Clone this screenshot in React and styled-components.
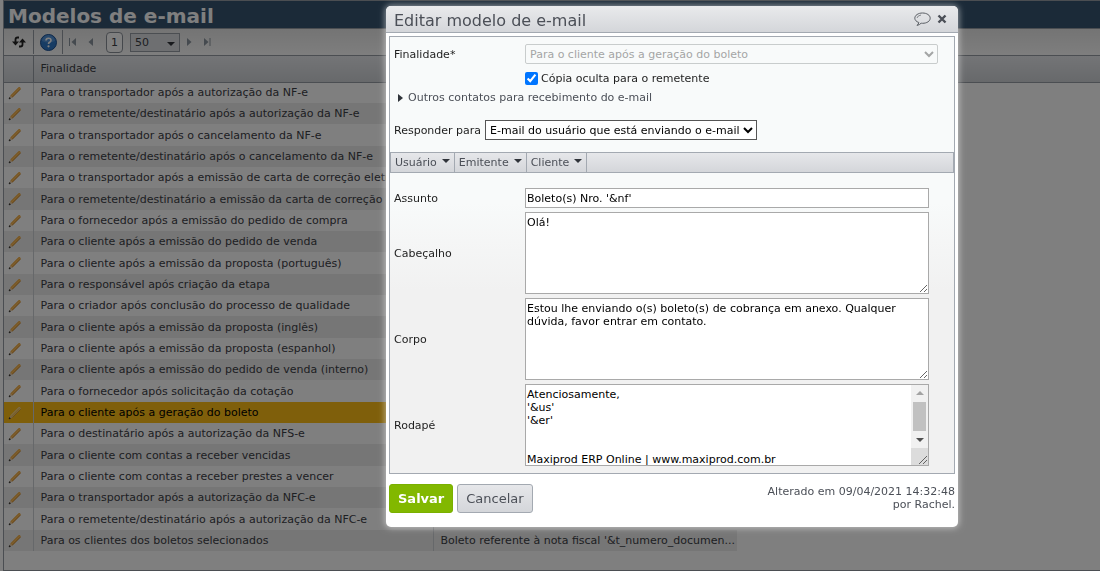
import React, { useState } from "react";
import styled, { createGlobalStyle, css } from "styled-components";

const GlobalStyle = createGlobalStyle`
    * {
        box-sizing: border-box;
    }

    body {
        margin: 0;
        background-color: #ffffff;
        font-family: 'DejaVu Sans', Verdana, sans-serif;
        font-size: 11px;
        line-height: 13px;
        color: #3c4046;
    }

    button, input, select, textarea {
        font-family: inherit;
        font-size: 11px;
    }
`;

//PAGE

const StyledPage = styled.main`
    min-height: 100vh;
    display: flex;
    flex-direction: column;
    margin-left: 3px;
    border: 1px solid #979da4;
    border-right: none;
`;

const StyledPageTitle = styled.h1`
    margin: 0;
    padding-left: 4px;
    height: 28px;
    background-color: #365470;
    border-bottom: 1px solid #979da4;
    color: #ffffff;
    font-size: 20px;
    font-weight: bold;
    line-height: 30px;
`;

const StyledToolbar = styled.div`
    display: flex;
    align-items: center;
    height: 27px;
    background: linear-gradient(#e8e8e8, #fdfdfd);
    border-bottom: 1px solid #979da4;
`;

const StyledToolGroup = styled.div`
    display: flex;
    align-items: center;
    justify-content: center;
    width: ${props => props.$width}px;
    height: 24px;
    border-right: 1px solid #979da4;
`;

const StyledIconButton = styled.button`
    display: flex;
    align-items: center;
    justify-content: center;
    padding: 0;
    border: none;
    background: none;
    cursor: pointer;
`;

const StyledPager = styled.div`
    display: flex;
    align-items: center;
    gap: 7px;
    padding-left: 6px;
`;

const StyledPagerSteps = styled.div`
    display: flex;
    align-items: center;
    gap: 12px;
`;

const StyledPageNumber = styled.button`
    width: 17px;
    height: 21px;
    margin: 0 0 0 6px;
    padding: 0;
    border: 1px solid #8b9199;
    border-radius: 4px;
    background-color: #ffffff;
    color: #3c4046;
`;

const StyledSelectWrap = styled.div`
    position: relative;

    svg {
        position: absolute;
        right: 5px;
        top: 9px;
        pointer-events: none;
    }
`;

const StyledPageSize = styled.select`
    appearance: none;
    display: block;
    width: 50px;
    height: 19px;
    padding: 0 4px;
    border: 1px solid #979da4;
    border-radius: 0;
    background-color: #dcdfe3;
    color: #3c4046;
`;

//GRID

const StyledGridHead = styled.thead`
    background: linear-gradient(#e8eaee, #cfd2d6);
`;

const StyledGrid = styled.table`
    width: 100%;
    border-collapse: collapse;
    table-layout: fixed;
`;

const StyledTh = styled.th`
    height: 26px;
    padding: 0 7px;
    border-bottom: 1px solid #979da4;
    border-right: ${props => props.$line ? "1px solid #979da4" : "none"};
    width: ${props => props.$width ? props.$width + "px" : "auto"};
    font-weight: normal;
    text-align: left;
`;

const StyledTd = styled.td`
    padding: 0 2px 0 7px;
    border-right: ${props => props.$line ? "1px solid #cdd0d4" : "none"};
    background-color: ${props => props.$bg};
    white-space: nowrap;
    overflow: hidden;
    text-overflow: ellipsis;
    color: ${props => props.$selected ? "#000000" : "#3c4046"};
`;

const StyledTr = styled.tr`
    height: 21px;

    &:nth-child(3n) {
        height: 22px;
    }
`;

const StyledPencil = styled(StyledIconButton)`
    margin-left: -3px;
`;

//DIALOG

const StyledOverlay = styled.div`
    position: fixed;
    inset: 0;
    display: flex;
    justify-content: flex-end;
    align-items: flex-start;
    padding: 6px 142px 0 0;
    background-color: rgba(0, 0, 0, 0.5);
`;

const StyledDialog = styled.section`
    width: 52%;
    min-width: 572px;
    border-radius: 5px;
    background-color: #ffffff;
    box-shadow: 0 0 6px 1px rgba(255, 255, 255, 0.5);
`;

const StyledDialogHeader = styled.header`
    display: flex;
    align-items: center;
    gap: 6px;
    height: 27px;
    padding: 0 11px 0 8px;
    border-bottom: 1px solid #a3a9b1;
    border-radius: 5px 5px 0 0;
    background: linear-gradient(#e9eaec, #d4d6da);
`;

const StyledDialogTitle = styled.h2`
    flex: 1;
    margin: 0;
    padding-top: 3px;
    color: #4b4f57;
    font-size: 16px;
    font-weight: normal;
    line-height: 20px;
`;

const StyledPanel = styled.div`
    margin: 3px;
    padding: 7px 0 3px;
    border: 1px solid #a3a9b1;
    background: linear-gradient(#f8fafa 0, #f8fafa 38%, #f1f1f1 58%);
    color: #1e1e1e;
`;

const StyledField = styled.div`
    display: grid;
    grid-template-columns: 131px 1fr;
    align-items: center;
    padding: 0 ${props => props.$right || 25}px 0 4px;
    margin-bottom: 4px;
`;

const StyledDisabledSelect = styled.select`
    width: 100%;
    height: 20px;
    padding: 0;
    border: 1px solid #b4b8b8;
    border-radius: 2px;
    background-color: #f8fafa;
    color: #808080;
`;

const StyledCheckRow = styled.div`
    display: flex;
    align-items: center;
    gap: 3px;
    padding: 4px 0 0 135px;

    input {
        width: 13px;
        height: 13px;
        margin: 0;
    }
`;

const StyledExpander = styled.button`
    display: flex;
    align-items: center;
    gap: 5px;
    margin: 6px 0 16px;
    padding: 0 8px;
    border: none;
    background: none;
    color: #4b4f57;
    line-height: 13px;
`;

const StyledReply = styled.div`
    display: flex;
    align-items: center;
    gap: 4px;
    padding-left: 4px;
    margin-bottom: 12px;
`;

const StyledReplySelect = styled.select`
    height: 20px;
    padding: 0;
    border: 1px solid #555555;
    border-radius: 0;
    background-color: #ffffff;
    color: #000000;
`;

const StyledMenuBar = styled.div`
    display: flex;
    height: 21px;
    margin-bottom: 15px;
    border: 1px solid #a3a9b1;
    background: linear-gradient(#e6e7ea, #d4d6da);
`;

const StyledMenuButton = styled.button`
    display: flex;
    gap: 5px;
    padding: 3px 4px 0;
    border: none;
    border-right: 1px solid #a3a9b1;
    background: none;
    color: #4b4f57;
    line-height: 13px;

    svg {
        margin-top: 3px;
    }
`;

const fieldBox = css`
    display: block;
    width: 100%;
    padding: 1px;
    border: 1px solid #a9a9a9;
    border-radius: 0;
    background-color: #ffffff;
    color: #000000;
    outline: none;
`;

const StyledInput = styled.input`
    ${fieldBox}
    height: 20px;
`;

const StyledTextarea = styled.textarea`
    ${fieldBox}
    height: 82px;
    padding-top: 3px;
    line-height: 13px;
    resize: ${props => props.$scrolled ? "none" : "vertical"};
`;

const StyledScrollArea = styled.div`
    position: relative;
`;

const StyledScrollbar = styled.div`
    position: absolute;
    top: 1px;
    right: 1px;
    bottom: 1px;
    width: 17px;
    display: flex;
    flex-direction: column;
    align-items: center;
    background-color: #f1f1f1;
    pointer-events: none;
`;

const StyledScrollArrow = styled.div`
    display: flex;
    align-items: center;
    height: 17px;
    transform: ${props => props.$up ? "rotate(180deg)" : "none"};
`;

const StyledScrollThumb = styled.div`
    flex: 1;
    width: 13px;
    background-color: #c1c1c1;
`;

const StyledScrollCorner = styled.div`
    display: flex;
    align-items: flex-end;
    justify-content: flex-end;
    width: 17px;
    height: 17px;
    background-color: #dcdcdc;
`;

const StyledFooter = styled.footer`
    display: flex;
    align-items: flex-start;
    gap: 4px;
    padding: 7px 3px 14px;
`;

const StyledButton = styled.button`
    height: 29px;
    padding: 0 8px;
    border: 1px solid ${props => props.$primary ? "#7ab000" : "#a3a9b1"};
    border-radius: 3px;
    background: ${props => props.$primary ? "#82b800" : "linear-gradient(#e6e7ea, #d4d6da)"};
    color: ${props => props.$primary ? "#ffffff" : "#4b4f57"};
    font-size: 13px;
    font-weight: ${props => props.$primary ? "bold" : "normal"};
`;

const StyledChanged = styled.p`
    width: 200px;
    margin: 1px 0 0 auto;
    color: #4b4f57;
    text-align: right;
`;

//ICONS

const CaretDown = ({ size = 8, color = "#30343a" }) => (
    <svg width={size} height={size / 2} viewBox="0 0 8 4"><path d="M0 0h8L4 4z" fill={color} /></svg>
);

const StepIcon = ({ next }) => (
    <svg width="5" height="8" viewBox="0 0 5 8"><path d={next ? "M0 0v8l4.500-4z" : "M5 0v8L0.500 4z"} fill="#8b959e" /></svg>
);

const EdgeIcon = ({ next }) => (
    <svg width="7" height="8" viewBox="0 0 7 8">
        <path d={next ? "M0 0v8l4.500-4z" : "M7 0v8L2.500 4z"} fill="#8b959e" />
        <path d={next ? "M6 0v8" : "M0.500 0v8"} stroke="#8b959e" />
    </svg>
);

const RefreshIcon = () => (
    <svg width="14" height="12" viewBox="0 0 14 12" fill="none" stroke="#222" strokeWidth="1.800">
        <path d="M7 1.500H5.500Q3.500 1.500 3.500 3.500V7" />
        <path d="M0 5.500h7L3.500 9.500z" fill="#222" stroke="none" />
        <path d="M7 10.500h1.500q2 0 2-2V5" />
        <path d="M7 6.500h7L10.500 2.500z" fill="#222" stroke="none" />
    </svg>
);

const HelpIcon = () => (
    <svg width="17" height="17" viewBox="0 0 17 17">
        <circle cx="8.500" cy="8.500" r="8" fill="#2f78c8" stroke="#1c4f92" />
        <path d="M2 7a6.500 6 0 0 1 13 0q-6.500 3-13 0z" fill="#6aa5e2" opacity="0.6" />
        <path d="M6 6.500Q6 4.200 8.500 4.200T11 6.300Q11 7.500 9.700 8.200T8.500 10" fill="none" stroke="#fff" strokeWidth="1.600" />
        <circle cx="8.500" cy="12.300" r="1.100" fill="#fff" />
    </svg>
);

const PencilIcon = ({ pale }) => (
    <svg width="14" height="14" viewBox="0 0 14 14">
        <path d="M2.300 9.500 10.500 1.200q0.700-0.600 1.500 0.100l0.500 0.600q0.600 0.700-0.100 1.400L4.200 11.500z" fill={pale ? "#f5d9a0" : "#f0a83c"} />
        <path d="M3.200 10.500 11.500 2.200" stroke={pale ? "#ffb300" : "#ffcf80"} strokeWidth="0.800" />
        <path d="M4.200 11.500 12.500 3.200" stroke="#b8741f" strokeWidth="0.600" />
        <path d="M2.300 9.500 1 13l3.200-1.500z" fill="#e8c9a0" />
        <path d="M1.500 11.500 1 13l1.500-0.600z" fill="#222" stroke="#222" strokeWidth="0.500" />
    </svg>
);

const BalloonIcon = () => (
    <svg width="17" height="15" viewBox="0 0 17 15" fill="none" stroke="#5a5e64">
        <path d="M4.800 10.500C2.300 9.700 0.800 8 0.800 6.200 0.800 3.300 4.200 1 8.500 1s7.700 2.200 7.700 5.200-3.400 5.100-7.700 5.100q-0.700 0-1.400-0.100-1.400 1.700-4.100 2.200 1.600-1.300 1.800-2.900z" />
        <path d="M3 6Q3.500 3.500 7 3" strokeWidth="0.700" />
    </svg>
);

const CloseIcon = () => (
    <svg width="10" height="10" viewBox="0 0 10 10"><path d="M1.500 1.500l7 7M8.500 1.500l-7 7" stroke="#4b4f57" strokeWidth="2.400" /></svg>
);

const GripIcon = () => (
    <svg width="10" height="10" viewBox="0 0 10 10"><path d="M1 9l8-8M5 9l4-4" stroke="#555" strokeWidth="0.900" /></svg>
);

//DATA

const models = [
    "Para o transportador após a autorização da NF-e",
    "Para o remetente/destinatário após a autorização da NF-e",
    "Para o transportador após o cancelamento da NF-e",
    "Para o remetente/destinatário após o cancelamento da NF-e",
    "Para o transportador após a emissão de carta de correção eletrônica",
    "Para o remetente/destinatário a emissão da carta de correção eletrônica",
    "Para o fornecedor após a emissão do pedido de compra",
    "Para o cliente após a emissão do pedido de venda",
    "Para o cliente após a emissão da proposta (português)",
    "Para o responsável após criação da etapa",
    "Para o criador após conclusão do processo de qualidade",
    "Para o cliente após a emissão da proposta (inglês)",
    "Para o cliente após a emissão da proposta (espanhol)",
    "Para o cliente após a emissão do pedido de venda (interno)",
    "Para o fornecedor após solicitação da cotação",
    "Para o cliente após a geração do boleto",
    "Para o destinatário após a autorização da NFS-e",
    "Para o cliente com contas a receber vencidas",
    "Para o cliente com contas a receber prestes a vencer",
    "Para o transportador após a autorização da NFC-e",
    "Para o remetente/destinatário após a autorização da NFC-e",
    "Para os clientes dos boletos selecionados",
];

const selectedModel = 15;

const rowColor = (index) => {
    if (index === selectedModel) return "#ffbf17";
    return index % 2 ? "#ececec" : "#ffffff";
};

const Toolbar = () => (
    <StyledToolbar>
        <StyledToolGroup $width={30}>
            <StyledIconButton aria-label="Atualizar"><RefreshIcon /></StyledIconButton>
        </StyledToolGroup>
        <StyledToolGroup $width={29}>
            <StyledIconButton aria-label="Ajuda"><HelpIcon /></StyledIconButton>
        </StyledToolGroup>
        <StyledPager>
            <StyledPagerSteps>
                <StyledIconButton aria-label="Primeira"><EdgeIcon /></StyledIconButton>
                <StyledIconButton aria-label="Anterior"><StepIcon /></StyledIconButton>
            </StyledPagerSteps>
            <StyledPageNumber>1</StyledPageNumber>
            <StyledSelectWrap>
                <StyledPageSize aria-label="Itens" defaultValue="50">
                    <option>50</option>
                </StyledPageSize>
                <CaretDown />
            </StyledSelectWrap>
            <StyledPagerSteps>
                <StyledIconButton aria-label="Próxima"><StepIcon next /></StyledIconButton>
                <StyledIconButton aria-label="Última"><EdgeIcon next /></StyledIconButton>
            </StyledPagerSteps>
        </StyledPager>
    </StyledToolbar>
);

const ModelGrid = () => (
    <StyledGrid>
        <StyledGridHead>
            <tr>
                <StyledTh $width={29} $line />
                <StyledTh $width={400}>Finalidade</StyledTh>
                <StyledTh $width={304} />
                <StyledTh />
            </tr>
        </StyledGridHead>
        <tbody>
            {models.map((model, index) => (
                <StyledTr key={model}>
                    <StyledTd $line $bg={rowColor(index)}>
                        <StyledPencil aria-label="Editar"><PencilIcon pale={index === selectedModel} /></StyledPencil>
                    </StyledTd>
                    <StyledTd $line $bg={rowColor(index)} $selected={index === selectedModel}>{model}</StyledTd>
                    <StyledTd $bg={rowColor(index)}>
                        {index === models.length - 1 && "Boleto referente à nota fiscal '&t_numero_documen..."}
                    </StyledTd>
                </StyledTr>
            ))}
        </tbody>
    </StyledGrid>
);

const EditDialog = () => {
    const [copy, setCopy] = useState(true);

    return (
        <StyledDialog role="dialog" aria-labelledby="dialog-title">
            <StyledDialogHeader>
                <StyledDialogTitle id="dialog-title">Editar modelo de e-mail</StyledDialogTitle>
                <StyledIconButton aria-label="Comentar"><BalloonIcon /></StyledIconButton>
                <StyledIconButton aria-label="Fechar"><CloseIcon /></StyledIconButton>
            </StyledDialogHeader>

            <StyledPanel>
                <StyledField $right={16}>
                    <label htmlFor="purpose">Finalidade*</label>
                    <StyledDisabledSelect id="purpose" disabled>
                        <option>Para o cliente após a geração do boleto</option>
                    </StyledDisabledSelect>
                </StyledField>
                <StyledCheckRow>
                    <input id="copy" type="checkbox" checked={copy} onChange={() => setCopy(!copy)} />
                    <label htmlFor="copy">Cópia oculta para o remetente</label>
                </StyledCheckRow>
                <StyledExpander>
                    <svg width="5" height="8" viewBox="0 0 5 8"><path d="M0 0v8l5-4z" fill="#30343a" /></svg>
                    Outros contatos para recebimento do e-mail
                </StyledExpander>
                <StyledReply>
                    <label htmlFor="reply">Responder para</label>
                    <StyledReplySelect id="reply">
                        <option>E-mail do usuário que está enviando o e-mail</option>
                    </StyledReplySelect>
                </StyledReply>
                <StyledMenuBar>
                    <StyledMenuButton>Usuário <CaretDown /></StyledMenuButton>
                    <StyledMenuButton>Emitente <CaretDown /></StyledMenuButton>
                    <StyledMenuButton>Cliente <CaretDown /></StyledMenuButton>
                </StyledMenuBar>
                <StyledField>
                    <label htmlFor="subject">Assunto</label>
                    <StyledInput id="subject" defaultValue="Boleto(s) Nro. '&nf'" />
                </StyledField>
                <StyledField>
                    <label htmlFor="header">Cabeçalho</label>
                    <StyledTextarea id="header" defaultValue="Olá!" />
                </StyledField>
                <StyledField>
                    <label htmlFor="body">Corpo</label>
                    <StyledTextarea id="body" defaultValue="Estou lhe enviando o(s) boleto(s) de cobrança em anexo. Qualquer dúvida, favor entrar em contato." />
                </StyledField>
                <StyledField>
                    <label htmlFor="footer">Rodapé</label>
                    <StyledScrollArea>
                        <StyledTextarea id="footer" $scrolled defaultValue={"Atenciosamente,\n'&us'\n'&er'\n\n\nMaxiprod ERP Online | www.maxiprod.com.br\n\n"} />
                        <StyledScrollbar aria-hidden="true">
                            <StyledScrollArrow $up><CaretDown color="#a3a3a3" /></StyledScrollArrow>
                            <StyledScrollThumb />
                            <StyledScrollArrow><CaretDown color="#505050" /></StyledScrollArrow>
                            <StyledScrollCorner><GripIcon /></StyledScrollCorner>
                        </StyledScrollbar>
                    </StyledScrollArea>
                </StyledField>
            </StyledPanel>

            <StyledFooter>
                <StyledButton $primary>Salvar</StyledButton>
                <StyledButton>Cancelar</StyledButton>
                <StyledChanged>Alterado em 09/04/2021 14:32:48 por Rachel.</StyledChanged>
            </StyledFooter>
        </StyledDialog>
    );
};

const App = () => (
    <>
        <GlobalStyle />
        <StyledPage>
            <StyledPageTitle>Modelos de e-mail</StyledPageTitle>
            <Toolbar />
            <ModelGrid />
        </StyledPage>
        <StyledOverlay>
            <EditDialog />
        </StyledOverlay>
    </>
);

export default App;
